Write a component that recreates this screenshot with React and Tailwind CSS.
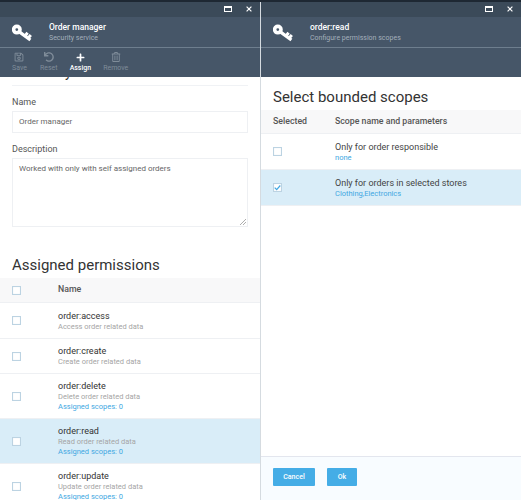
import React from "react";
import { FaPlus, FaRegSave, FaRegTrashAlt, FaUndo } from "react-icons/fa";

const font = { fontFamily: "Roboto, sans-serif" };

const permissions = [
  { name: "order:access", desc: "Access order related data", height: "h-[36px]" },
  { name: "order:create", desc: "Create order related data", height: "h-[35px]" },
  { name: "order:delete", desc: "Delete order related data", scopes: true, height: "h-[45px]" },
  { name: "order:read", desc: "Read order related data", scopes: true, height: "h-[45px]", active: true },
  { name: "order:update", desc: "Update order related data", scopes: true, height: "h-[45px]" },
];

const KeyIcon = () => (
  <svg viewBox="0 0 20 20" className="h-[20px] w-[20px]" fill="none" stroke="white">
    <circle cx="4.8" cy="7.6" r="3.2" strokeWidth="3.6" />
    <path d="M7 9.6 L18.4 18" strokeWidth="3.2" />
    <path d="M13 14 L15.6 10.8 M16 16.2 L18.8 13" strokeWidth="3" />
  </svg>
);

const Checkbox = ({ checked }) => (
  <span className="flex h-[9px] w-[9px] items-center justify-center border border-[#bcd3e2] bg-white shadow-[inset_0_0_1px_#cfdde6]">
    {checked && (
      <svg viewBox="0 0 10 10" className="h-[7px] w-[7px]">
        <path d="M1 5.2 L3.8 8 L9 2.2" fill="none" stroke="#41a7e2" strokeWidth="1.8" />
      </svg>
    )}
  </span>
);

const WindowBar = () => (
  <div className="flex h-[15px] items-center justify-end bg-[#3b4a59] pb-[2px]">
    <span className="mr-[14px] h-[6px] w-[8px] border border-t-2 border-white" />
    <svg viewBox="0 0 10 10" className="mr-[8px] h-[6px] w-[6px]">
      <path d="M1 1 L9 9 M9 1 L1 9" stroke="white" strokeWidth="2" />
    </svg>
  </div>
);

const Header = ({ title, subtitle }) => (
  <div className="flex h-[31px] items-center border-b border-[#6e7e8e] bg-[#465668] pl-[12px]">
    <KeyIcon />
    <div className="ml-[17px]">
      <div className="text-[8.5px] font-medium leading-[12px] text-white">{title}</div>
      <div className="text-[7px] leading-[11px] text-[#a3afbb]">{subtitle}</div>
    </div>
  </div>
);

const ToolButton = ({ icon, label, active, className }) => (
  <div className={`flex flex-col items-center ${className}`}>
    <span className={`flex h-[14px] items-center ${active ? "text-white" : "text-[#7f8c99]"}`}>{icon}</span>
    <span className={`text-[7px] leading-[9px] ${active ? "font-medium text-white" : "text-[#7f8c99]"}`}>{label}</span>
  </div>
);

const LeftPanel = () => (
  <div className="flex h-full w-[261px] flex-col overflow-hidden border-r border-[#d5dbe0]">
    <WindowBar />
    <Header title="Order manager" subtitle="Security service" />
    <div className="flex h-[29px] items-start bg-[#465668] pl-[12px] pt-[2px]">
      <ToolButton icon={<FaRegSave className="h-[10px] w-[10px]" />} label="Save" />
      <ToolButton icon={<FaUndo className="h-[10px] w-[10px]" />} label="Reset" className="ml-[13px]" />
      <ToolButton icon={<FaPlus className="h-[9px] w-[9px]" />} label="Assign" active className="ml-[12px]" />
      <ToolButton icon={<FaRegTrashAlt className="h-[10px] w-[10px]" />} label="Remove" className="ml-[12px]" />
    </div>
    <div className="flex-1 overflow-hidden bg-white">
      <div className="-mt-[14px] px-[12px]">
        <div className="border-b border-[#f0f2f5] pb-[4px] text-[14px] leading-[18px] text-[#333]">Summary</div>
        <div className="mt-[10px] text-[9px] leading-[13px] text-[#555]">Name</div>
        <div className="mt-[2px] flex h-[22px] items-center border border-[#eef0f3] px-[6px] text-[8px] text-[#666]">
          Order manager
        </div>
        <div className="mt-[10px] text-[9px] leading-[13px] text-[#555]">Description</div>
        <div className="relative mt-[2px] h-[69px] border border-[#eef0f3] px-[6px] py-[4px] text-[8px] leading-[12px] text-[#666]">
          Worked with only with self assigned orders
          <svg viewBox="0 0 6 6" className="absolute bottom-[1px] right-[1px] h-[6px] w-[6px]">
            <path d="M0 6 L6 0 M3 6 L6 3" stroke="#999" strokeWidth="0.8" />
          </svg>
        </div>
        <div className="mt-[27px] text-[15px] leading-[22px] text-[#333]">Assigned permissions</div>
      </div>
      <div className="mt-[2px] flex h-[25px] items-center border-b border-[#eef0f3] bg-[#f8f8f9] pl-[12px]">
        <Checkbox />
        <span className="ml-[37px] text-[8.75px] font-medium text-[#555]">Name</span>
      </div>
      {permissions.map((p) => (
        <div
          key={p.name}
          className={`flex items-center border-b border-[#eef0f3] pl-[12px] ${p.height} ${p.active ? "bg-[#d9edf8]" : "bg-white"}`}
        >
          <Checkbox />
          <div className="ml-[37px]">
            <div className="text-[9px] leading-[12px] text-[#333]">{p.name}</div>
            <div className="text-[7.5px] leading-[10px] text-[#a5a5a5]">{p.desc}</div>
            {p.scopes && <div className="text-[7.5px] leading-[10px] text-[#41a7e2]">Assigned scopes: 0</div>}
          </div>
        </div>
      ))}
    </div>
  </div>
);

const ScopeRow = ({ title, sub, checked }) => (
  <div className={`flex h-[36px] items-center border-b border-[#eef0f3] pl-[12px] ${checked ? "bg-[#d9edf8]" : "bg-white"}`}>
    <Checkbox checked={checked} />
    <div className="ml-[53px]">
      <div className="text-[9px] leading-[12px] text-[#444]">{title}</div>
      <div className="text-[7.5px] leading-[10px] text-[#41a7e2]">{sub}</div>
    </div>
  </div>
);

const RightPanel = () => (
  <div className="flex h-full flex-1 flex-col overflow-hidden">
    <WindowBar />
    <Header title="order:read" subtitle="Configure permission scopes" />
    <div className="h-[29px] bg-[#465668]" />
    <div className="flex flex-1 flex-col bg-white">
      <div className="px-[12px] pt-[9px] text-[15px] leading-[22px] text-[#333]">Select bounded scopes</div>
      <div className="mt-[2px] flex h-[24px] items-center border-b border-[#eef0f3] bg-[#f8f8f9] pl-[12px] text-[8.75px] font-medium text-[#555]">
        <span className="w-[62px]">Selected</span>
        <span>Scope name and parameters</span>
      </div>
      <ScopeRow title="Only for order responsible" sub="none" />
      <ScopeRow title="Only for orders in selected stores" sub="Clothing,Electronics" checked />
      <div className="flex-1" />
      <div className="flex h-[44px] items-start gap-[12px] border-t border-[#e3e6ee] bg-[#f8fcff] pl-[12px] pt-[11px]">
        <button className="h-[18px] w-[42px] rounded-[1px] bg-[#45ade6] text-[7px] font-medium text-white">Cancel</button>
        <button className="h-[18px] w-[30px] rounded-[1px] bg-[#45ade6] text-[7px] font-medium text-white">Ok</button>
      </div>
    </div>
  </div>
);

export default function App() {
  return (
    <div className="flex h-[500px] w-[521px] flex-col overflow-hidden" style={font}>
      <div className="h-[2px] bg-[#1e2833]" />
      <div className="flex min-h-0 flex-1">
        <LeftPanel />
        <RightPanel />
      </div>
    </div>
  );
}
